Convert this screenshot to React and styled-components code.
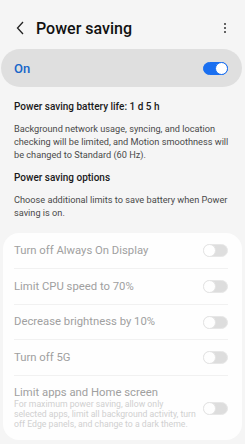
import React from "react";
import styled, { createGlobalStyle } from "styled-components";

const Global = createGlobalStyle`
  html, body {
    margin: 0;
    padding: 0;
    background: #f5f5f5;
    font-family: Roboto, "Noto Sans", sans-serif;
  }
`;

const Page = styled.div`
  width: 245px;
  height: 444px;
  overflow: hidden;
  background: #f5f5f5;
`;

const Header = styled.div`
  display: flex;
  align-items: center;
  height: 30px;
  padding: 13px 12px 0 12px;
  margin-bottom: 6px;
`;

const Back = styled.div`
  width: 16px;
  height: 16px;
  display: flex;
  align-items: center;
  justify-content: center;
  margin-right: 8px;
`;

const Title = styled.div`
  flex: 1;
  font-size: 16px;
  font-weight: 500;
  color: #111;
`;

const Kebab = styled.div`
  width: 4px;
  display: flex;
  flex-direction: column;
  gap: 2px;
  align-items: center;
  margin-right: 6px;

  span {
    width: 2px;
    height: 2px;
    border-radius: 50%;
    background: #333;
  }
`;

const MasterBar = styled.div`
  display: flex;
  align-items: center;
  justify-content: space-between;
  height: 38px;
  margin: 0 3px 0 1px;
  padding: 0 14px 0 13px;
  border-radius: 19px;
  background: #dfdfdf;
`;

const OnLabel = styled.div`
  font-size: 13px;
  font-weight: 500;
  color: #1766c9;
`;

const Track = styled.div`
  position: relative;
  width: 25px;
  height: 13px;
  border-radius: 7px;
  box-sizing: border-box;
  background: ${({ $on }) => ($on ? "#1a6ff0" : "#d6d6d6")};
  border: 1px solid ${({ $on }) => ($on ? "#1a6ff0" : "#e2e2e2")};
  opacity: ${({ $on }) => ($on ? 1 : 0.8)};
`;

const Thumb = styled.div`
  position: absolute;
  top: -1px;
  ${({ $on }) => ($on ? "right: -1px;" : "left: -1px;")}
  width: 13px;
  height: 13px;
  box-sizing: border-box;
  border-radius: 50%;
  background: #fff;
  border: 1.5px solid ${({ $on }) => ($on ? "#1a6ff0" : "#dedede")};
`;

const Info = styled.div`
  padding: 13px 12px 0 14px;
`;

const Heading = styled.div`
  font-size: 10px;
  font-weight: 500;
  color: #1a1a1a;
  line-height: 13px;
  margin-bottom: ${({ $mb }) => $mb}px;
`;

const Para = styled.div`
  font-size: 9.2px;
  color: #4a4a4a;
  line-height: 13px;
  margin-bottom: ${({ $mb }) => $mb}px;
`;

const Card = styled.div`
  margin: 14px 3px 0 3px;
  background: #fefefe;
  border-radius: 16px;
  padding: 0 14px 0 11px;
  height: 207px;
  overflow: hidden;
`;

const Row = styled.div`
  display: flex;
  align-items: center;
  justify-content: space-between;
  height: ${({ $h }) => $h}px;
  border-top: ${({ $first }) => ($first ? "none" : "1px solid #f1f1f1")};
  box-sizing: border-box;
`;

const RowText = styled.div`
  flex: 1;
  max-width: 184px;
`;

const RowTitle = styled.div`
  font-size: 11.3px;
  color: #a0a0a0;
  line-height: 14px;
`;

const RowSub = styled.div`
  font-size: 8.7px;
  color: #d0d0d0;
  line-height: 9.8px;
`;

const ToggleWrap = styled.div`
  margin-left: auto;
`;

const Toggle = ({ on }) => (
  <ToggleWrap>
    <Track $on={on}>
      <Thumb $on={on} />
    </Track>
  </ToggleWrap>
);

const options = [
  { title: "Turn off Always On Display", h: 35 },
  { title: "Limit CPU speed to 70%", h: 36 },
  { title: "Decrease brightness by 10%", h: 35 },
  { title: "Turn off 5G", h: 36 },
  {
    title: "Limit apps and Home screen",
    sub: "For maximum power saving, allow only selected apps, limit all background activity, turn off Edge panels, and change to a dark theme.",
    h: 65,
  },
];

export default function App() {
  return (
    <Page>
      <Global />
      <Header>
        <Back>
          <svg width="9" height="14" viewBox="0 0 9 14">
            <path d="M7 1 L1.5 7 L7 13" fill="none" stroke="#222" strokeWidth="1.3" />
          </svg>
        </Back>
        <Title>Power saving</Title>
        <Kebab>
          <span />
          <span />
          <span />
        </Kebab>
      </Header>

      <MasterBar>
        <OnLabel>On</OnLabel>
        <Toggle on />
      </MasterBar>

      <Info>
        <Heading $mb={9}>Power saving battery life: 1 d 5 h</Heading>
        <Para $mb={10}>
          Background network usage, syncing, and location checking will be
          limited, and Motion smoothness will be changed to Standard (60 Hz).
        </Para>
        <Heading $mb={9}>Power saving options</Heading>
        <Para $mb={10}>
          Choose additional limits to save battery when Power saving is on.
        </Para>
      </Info>

      <Card>
        {options.map((o, i) => (
          <Row key={o.title} $h={o.h} $first={i === 0}>
            <RowText>
              <RowTitle>{o.title}</RowTitle>
              {o.sub && <RowSub>{o.sub}</RowSub>}
            </RowText>
            <Toggle on={false} />
          </Row>
        ))}
      </Card>
    </Page>
  );
}
